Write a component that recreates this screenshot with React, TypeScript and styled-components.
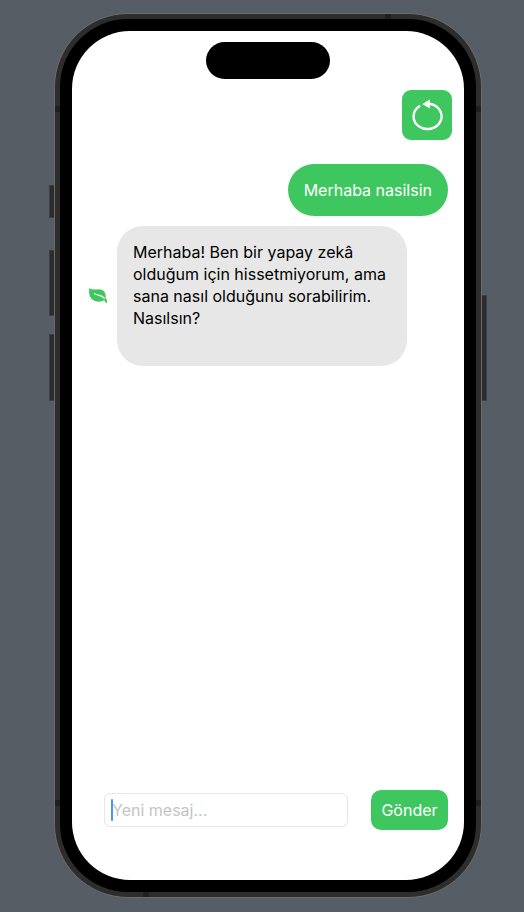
import React, { useState } from 'react';
import styled, { createGlobalStyle } from 'styled-components';

const green = '#3fc75f';

const GlobalStyle = createGlobalStyle`
  *, *::before, *::after { box-sizing: border-box; }
  body {
    margin: 0;
    background: #565d65;
    font-family: Inter, "Liberation Sans", sans-serif;
    font-size: 16px;
    line-height: 22px;
  }
  button, input { font: inherit; }
`;

const Stage = styled.div`
  display: grid;
  grid-template-columns: 5px minmax(0, 1fr) 5px;
  min-height: 100vh;
  padding: 13px 37px 14px 49px;
`;

const SideKeys = styled.div<{ $top: number }>`
  display: flex;
  flex-direction: column;
  padding-top: ${({ $top }) => $top}px;
`;

const Key = styled.span<{ $height: number; $gap?: number; $side: 'left' | 'right' }>`
  height: ${({ $height }) => $height}px;
  margin-bottom: ${({ $gap = 0 }) => $gap}px;
  background: #2c2c2c;
  border: 1px solid #3d4043;
  border-${({ $side }) => ($side === 'left' ? 'right' : 'left')}: 0;
`;

const Frame = styled.div`
  position: relative;
  display: flex;
  padding: 5px;
  border: 1px solid #6b6b6b;
  border-radius: 74px;
  background: #2d2d2d;
`;

const Band = styled.span<{ $edge: 'top' | 'bottom' | 'left' | 'right'; $from: 'start' | 'end'; $offset: number }>`
  position: absolute;
  background: #1e1f1f;
  ${({ $edge }) => $edge}: 0;
  ${({ $edge, $from, $offset }) => {
    const upright = $edge === 'left' || $edge === 'right';
    const side = upright ? ($from === 'start' ? 'top' : 'bottom') : $from === 'start' ? 'left' : 'right';
    return `${side}: ${$offset}px; width: ${upright ? 5 : 6}px; height: ${upright ? 6 : 5}px;`;
  }}
`;

const Bezel = styled.div`
  display: flex;
  flex: 1;
  min-width: 0;
  padding: 12px;
  border-radius: 68px;
  background: #000;
`;

const Screen = styled.main`
  display: flex;
  flex-direction: column;
  flex: 1;
  min-width: 0;
  padding: 11px 12px 50px;
  border-radius: 58px;
  background: #fff;
`;

const Island = styled.div`
  align-self: center;
  width: 124px;
  height: 37px;
  border-radius: 19px;
  background: #000;
`;

const ResetButton = styled.button`
  display: grid;
  place-items: center;
  align-self: flex-end;
  width: 50px;
  height: 50px;
  margin-top: 11px;
  padding: 0;
  border: 0;
  border-radius: 9px;
  background: ${green};
  color: #fff;
`;

const Messages = styled.section`
  display: flex;
  flex-direction: column;
  flex: 1;
  gap: 10px;
  padding: 24px 4px;
`;

const MessageRow = styled.div<{ $own?: boolean }>`
  display: flex;
  align-items: center;
  justify-content: ${({ $own }) => ($own ? 'flex-end' : 'flex-start')};
  gap: 9px;
`;

const Bubble = styled.p<{ $own?: boolean }>`
  max-width: 290px;
  min-height: ${({ $own }) => ($own ? 52 : 140)}px;
  margin: 0;
  padding: 15px 16px;
  border-radius: 26px;
  background: ${({ $own }) => ($own ? green : '#e7e7e7')};
  color: ${({ $own }) => ($own ? '#fff' : '#000')};
`;

const Composer = styled.form`
  display: flex;
  align-items: center;
  gap: 23px;
  padding: 0 4px 0 20px;
`;

const Field = styled.label`
  position: relative;
  flex: 1;
  min-width: 0;
`;

const MessageInput = styled.input`
  display: block;
  width: 100%;
  height: 34px;
  padding: 0 7px;
  border: 1px solid #e6e6e7;
  border-radius: 6px;
  background: #fff;
  color: #000;
  outline: 0;
  &::placeholder { color: #c4c4c6; opacity: 1; }
`;

const Caret = styled.span`
  position: absolute;
  top: 6px;
  left: 7px;
  width: 2px;
  height: 22px;
  border-radius: 1px;
  background: #4398fb;
`;

const SendButton = styled.button`
  width: 77px;
  height: 40px;
  padding: 0;
  border: 0;
  border-radius: 10px;
  background: ${green};
  color: #fff;
`;

const ResetIcon = () => (
  <svg width="32" height="32" viewBox="0 0 32 32" fill="none" aria-hidden="true">
    <path d="M8.300 7.200 A14 12.600 0 1 0 17.500 4.800" stroke="currentColor" strokeWidth="2.4" strokeLinecap="round" />
    <path d="M11.900 4.700 L18.200 .8 Q19 .5 19 1.300 V8.700 Q19 9.500 18.200 9.100 L11.900 5.600 Q11.300 5.100 11.900 4.700 Z" fill="currentColor" />
  </svg>
);

const LeafIcon = () => (
  <svg width="20" height="16" viewBox="0 0 20 16" aria-hidden="true">
    <path
      d="M1.100 1 C.9.3 1.500.1 2.100.6 C4 2.100 7 1.300 10.500 1.200 C15.500 1.200 18.300 4.500 17.600 9.800 C18.300 11 19.200 12.300 19.200 14 C19.200 15.400 17.800 15.500 17.500 14.300 C17.200 13.400 16.700 12.800 16 12.300 C12.500 14.600 6.500 14 3.500 10.800 C1 8.300 1 4.500 1.100 1 Z"
      fill={green}
    />
    <path d="M6.300 5.600 C9.300 7.700 13.500 6.600 16.400 10.300" stroke="#fff" strokeWidth="1.1" strokeLinecap="round" fill="none" />
  </svg>
);

const messages = [
  { own: true, text: 'Merhaba nasilsin' },
  {
    own: false,
    text: 'Merhaba! Ben bir yapay zekâ olduğum için hissetmiyorum, ama sana nasıl olduğunu sorabilirim. Nasılsın?',
  },
];

export default function App() {
  const [draft, setDraft] = useState('');

  return (
    <>
      <GlobalStyle />
      <Stage>
        <SideKeys $top={172}>
          <Key $side="left" $height={33} $gap={32} />
          <Key $side="left" $height={66} $gap={18} />
          <Key $side="left" $height={67} />
        </SideKeys>
        <Frame>
          <Band $edge="top" $from="end" $offset={90} />
          <Band $edge="left" $from="start" $offset={92} />
          <Band $edge="right" $from="start" $offset={92} />
          <Band $edge="left" $from="end" $offset={91} />
          <Band $edge="right" $from="end" $offset={91} />
          <Band $edge="bottom" $from="start" $offset={88} />
          <Bezel>
            <Screen>
              <Island />
              <ResetButton type="button" aria-label="Sohbeti sıfırla">
                <ResetIcon />
              </ResetButton>
              <Messages>
                {messages.map(({ own, text }) => (
                  <MessageRow key={text} $own={own}>
                    {!own && <LeafIcon />}
                    <Bubble $own={own}>{text}</Bubble>
                  </MessageRow>
                ))}
              </Messages>
              <Composer onSubmit={(event: React.FormEvent) => event.preventDefault()}>
                <Field>
                  <MessageInput
                    aria-label="Yeni mesaj"
                    placeholder="Yeni mesaj..."
                    value={draft}
                    onChange={(event) => setDraft(event.target.value)}
                  />
                  {draft === '' && <Caret />}
                </Field>
                <SendButton type="submit">Gönder</SendButton>
              </Composer>
            </Screen>
          </Bezel>
        </Frame>
        <SideKeys $top={282}>
          <Key $side="right" $height={106} />
        </SideKeys>
      </Stage>
    </>
  );
}
